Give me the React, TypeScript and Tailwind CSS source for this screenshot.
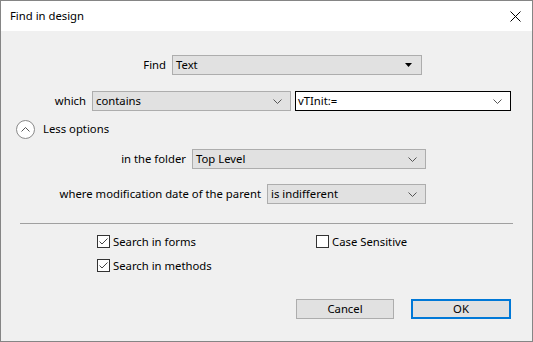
import React from 'react';

const font = { fontFamily: '"Noto Sans", "Segoe UI", sans-serif' };

const Chevron: React.FC = () => (
  <svg width="9" height="5" viewBox="0 0 9 5" className="shrink-0">
    <path d="M0.5 0.5 L4.5 4.5 L8.5 0.5" fill="none" stroke="#555" strokeWidth="1" />
  </svg>
);

const Select: React.FC<{ value: string; width: string; solid?: boolean }> = ({ value, width, solid }) => (
  <div className={`${width} h-[20px] flex items-center justify-between border border-[#adadad] bg-[#e1e1e1] pl-[3px] pr-[8px]`}>
    <span className="leading-none">{value}</span>
    {solid ? (
      <svg width="7" height="4" viewBox="0 0 7 4" className="shrink-0 mr-[1px]">
        <path d="M0 0 H7 L3.5 4 Z" fill="#000" />
      </svg>
    ) : (
      <Chevron />
    )}
  </div>
);

const Checkbox: React.FC<{ checked?: boolean; label: string }> = ({ checked, label }) => (
  <div className="flex items-center gap-[3px] h-[13px]">
    <div className="w-[13px] h-[13px] border border-[#333] bg-white flex items-center justify-center">
      {checked && (
        <svg width="11" height="11" viewBox="0 0 11 11">
          <path d="M1.5 5.5 L4 8 L9.5 2.5" fill="none" stroke="#444" strokeWidth="1" />
        </svg>
      )}
    </div>
    <span className="leading-none">{label}</span>
  </div>
);

export default function App() {
  return (
    <div className="w-[533px] h-[342px] border border-[#858585] flex flex-col text-[11.3px] text-black" style={font}>
      <div className="h-[30px] bg-white flex items-center justify-between pl-[9px] pr-[11px] shrink-0">
        <span>Find in design</span>
        <svg width="11" height="11" viewBox="0 0 11 11">
          <path d="M0.5 0.5 L10.5 10.5 M10.5 0.5 L0.5 10.5" stroke="#000" strokeWidth="1" />
        </svg>
      </div>
      <div className="flex-1 bg-[#f0f0f0] flex flex-col pt-[24px]">
        <div className="flex items-center">
          <span className="w-[171px] text-right pr-[6px]">Find</span>
          <Select value="Text" width="w-[250px]" solid />
        </div>
        <div className="flex items-center mt-[16px]">
          <span className="w-[91px] text-right pr-[6px]">which</span>
          <Select value="contains" width="w-[199px]" />
          <div className="ml-[4px] w-[216px] h-[20px] border border-black bg-white flex items-center justify-between pl-[2px] pr-[8px]">
            <span>vTInit:=</span>
            <Chevron />
          </div>
        </div>
        <div className="flex items-center mt-[9px] pl-[15px]">
          <div className="w-[19px] h-[19px] rounded-full border border-[#8a8a8a] bg-white flex items-center justify-center">
            <svg width="9" height="5" viewBox="0 0 9 5">
              <path d="M0.5 4.5 L4.5 0.5 L8.5 4.5" fill="none" stroke="#555" strokeWidth="1" />
            </svg>
          </div>
          <span className="ml-[8px]">Less options</span>
        </div>
        <div className="flex items-center mt-[10px]">
          <span className="w-[191px] text-right pr-[6px]">in the folder</span>
          <Select value="Top Level" width="w-[234px]" />
        </div>
        <div className="flex items-center mt-[15px]">
          <span className="w-[266px] text-right pr-[6px] whitespace-nowrap">where modification date of the parent</span>
          <Select value="is indifferent" width="w-[159px]" />
        </div>
        <div className="mx-[19px] mt-[19px] h-px bg-[#a0a0a0]" />
        <div className="flex items-start mt-[11px] pl-[96px]">
          <div className="flex flex-col gap-[11px] w-[219px]">
            <Checkbox checked label="Search in forms" />
            <Checkbox checked label="Search in methods" />
          </div>
          <Checkbox label="Case Sensitive" />
        </div>
        <div className="flex justify-end gap-[17px] pr-[21px] mt-[27px]">
          <button className="w-[98px] h-[20px] border border-[#adadad] bg-[#e1e1e1] leading-none">Cancel</button>
          <button className="w-[100px] h-[20px] border-2 border-[#0078d7] bg-[#e1e1e1] leading-none">OK</button>
        </div>
      </div>
    </div>
  );
}
